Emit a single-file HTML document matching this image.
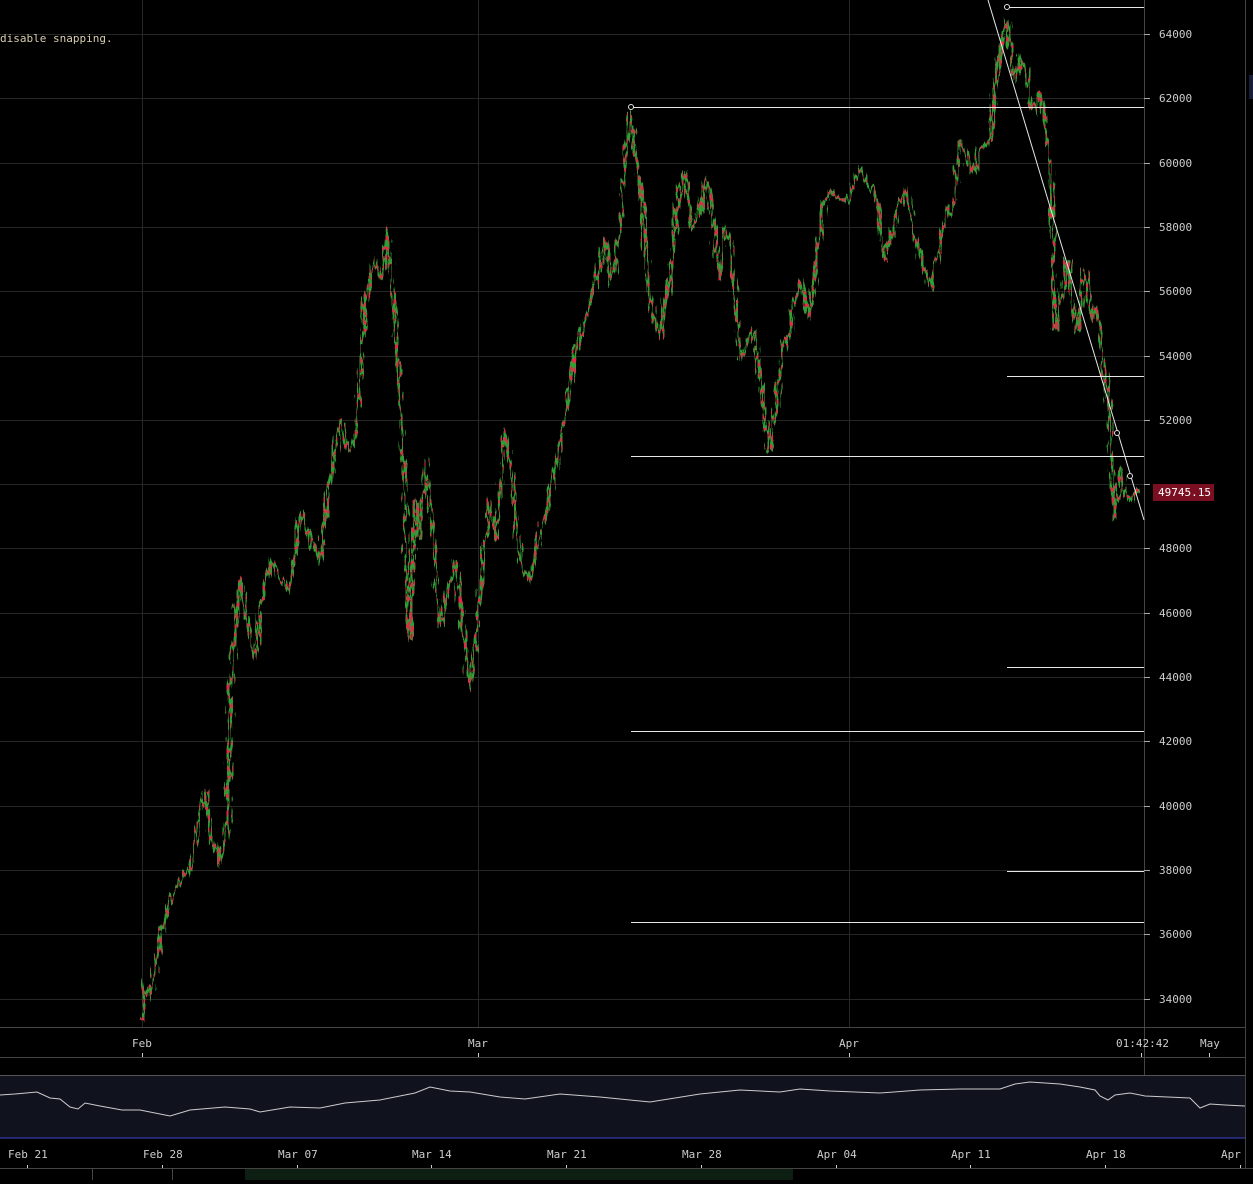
<!DOCTYPE html><html><head><style>
body{margin:0;background:#000;width:1253px;height:1180px;overflow:hidden;font-family:"DejaVu Sans Mono","Liberation Mono",monospace;}
svg text{font-family:"DejaVu Sans Mono","Liberation Mono",monospace;font-size:11px;fill:#ccc}
</style></head><body>
<svg width="1253" height="1180" xmlns="http://www.w3.org/2000/svg">
<defs><filter id="j" x="-5%" y="-5%" width="110%" height="110%"><feTurbulence type="fractalNoise" baseFrequency="0.35 0.05" numOctaves="2" seed="3"/><feDisplacementMap in="SourceGraphic" scale="14" xChannelSelector="R" yChannelSelector="G"/></filter></defs>
<rect width="1253" height="1180" fill="#000"/>
<g stroke="#262626" stroke-width="1">
<line x1="0" y1="34.5" x2="1144" y2="34.5"/><line x1="0" y1="98.5" x2="1144" y2="98.5"/>
<line x1="0" y1="163.5" x2="1144" y2="163.5"/><line x1="0" y1="227.5" x2="1144" y2="227.5"/>
<line x1="0" y1="291.5" x2="1144" y2="291.5"/><line x1="0" y1="356.5" x2="1144" y2="356.5"/>
<line x1="0" y1="420.5" x2="1144" y2="420.5"/><line x1="0" y1="484.5" x2="1144" y2="484.5"/>
<line x1="0" y1="548.5" x2="1144" y2="548.5"/><line x1="0" y1="613.5" x2="1144" y2="613.5"/>
<line x1="0" y1="677.5" x2="1144" y2="677.5"/><line x1="0" y1="741.5" x2="1144" y2="741.5"/>
<line x1="0" y1="806.5" x2="1144" y2="806.5"/><line x1="0" y1="870.5" x2="1144" y2="870.5"/>
<line x1="0" y1="934.5" x2="1144" y2="934.5"/><line x1="0" y1="999.5" x2="1144" y2="999.5"/>
<line x1="142.5" y1="0" x2="142.5" y2="1027"/><line x1="478.5" y1="0" x2="478.5" y2="1027"/>
<line x1="849.5" y1="0" x2="849.5" y2="1027"/>
</g>
<g stroke="#444"><line x1="1144.5" y1="0" x2="1144.5" y2="1075"/><line x1="0" y1="1027.5" x2="1245" y2="1027.5"/><line x1="0" y1="1057.5" x2="1245" y2="1057.5"/><line x1="1245.5" y1="0" x2="1245.5" y2="1168"/><line x1="0" y1="1168.5" x2="1253" y2="1168.5"/></g>
<g stroke="#aaa"><line x1="1144" y1="34.5" x2="1150" y2="34.5"/><line x1="1144" y1="98.5" x2="1150" y2="98.5"/><line x1="1144" y1="163.5" x2="1150" y2="163.5"/><line x1="1144" y1="227.5" x2="1150" y2="227.5"/><line x1="1144" y1="291.5" x2="1150" y2="291.5"/><line x1="1144" y1="356.5" x2="1150" y2="356.5"/><line x1="1144" y1="420.5" x2="1150" y2="420.5"/><line x1="1144" y1="484.5" x2="1150" y2="484.5"/><line x1="1144" y1="548.5" x2="1150" y2="548.5"/><line x1="1144" y1="613.5" x2="1150" y2="613.5"/><line x1="1144" y1="677.5" x2="1150" y2="677.5"/><line x1="1144" y1="741.5" x2="1150" y2="741.5"/><line x1="1144" y1="806.5" x2="1150" y2="806.5"/><line x1="1144" y1="870.5" x2="1150" y2="870.5"/><line x1="1144" y1="934.5" x2="1150" y2="934.5"/><line x1="1144" y1="999.5" x2="1150" y2="999.5"/></g>
<g>
<text x="1159" y="38">64000</text><text x="1159" y="102">62000</text><text x="1159" y="167">60000</text><text x="1159" y="231">58000</text><text x="1159" y="295">56000</text><text x="1159" y="360">54000</text><text x="1159" y="424">52000</text><text x="1159" y="552">48000</text><text x="1159" y="617">46000</text><text x="1159" y="681">44000</text><text x="1159" y="745">42000</text><text x="1159" y="810">40000</text><text x="1159" y="874">38000</text><text x="1159" y="938">36000</text><text x="1159" y="1003">34000</text>
</g>
<text x="0" y="42" style="fill:#d9cdb0">disable snapping.</text>
<g filter="url(#j)">
<polyline fill="none" stroke="#2e9e34" stroke-width="3" points="142,1020 145,985 150,995 160,940 170,900 180,880 190,870 205,790 212,840 220,860 228,820 230,700 240,580 248,630 255,660 262,600 270,560 280,580 290,590 300,510 310,540 320,560 330,480 340,420 348,450 355,440 360,380 365,300 375,260 382,280 388,230 395,330 402,420 406,560 410,640 415,500 420,540 425,460 432,520 440,630 448,590 455,560 462,620 470,690 475,640 480,600 485,540 490,500 497,540 505,430 512,480 520,560 530,580 538,540 545,520 552,480 560,450 568,400 575,350 582,330 590,300 598,270 605,240 610,280 615,270 622,200 630,110 635,150 640,180 645,240 650,300 655,320 660,340 665,300 670,280 678,200 685,170 692,230 700,210 705,180 710,190 715,240 720,280 725,230 730,240 735,300 740,360 748,340 755,330 760,380 765,420 770,450 775,410 780,370 785,340 790,330 795,300 800,280 805,300 810,320 815,270 820,230 825,200 830,190 840,200 850,200 855,180 860,170 868,185 875,190 880,230 885,260 890,240 895,220 900,200 905,190 910,210 915,240 922,260 930,290 938,250 945,220 950,210 955,200 960,140 968,160 975,170 982,150 990,140 995,90 1000,50 1004,30 1007,20 1011,60 1015,80 1020,60 1025,70 1030,100 1035,110 1040,90 1045,120 1050,160 1052,200 1055,330 1058,320 1060,300 1064,280 1068,260 1072,300 1078,330 1082,290 1085,270 1090,300 1092,320 1096,310 1100,340 1104,370 1108,400 1112,470 1115,520 1118,500 1120,470 1125,490 1130,500 1135,495 1140,490"/>
<polyline fill="none" stroke="#e8254a" stroke-width="2" stroke-dasharray="4 5" points="142,1020 145,985 150,995 160,940 170,900 180,880 190,870 205,790 212,840 220,860 228,820 230,700 240,580 248,630 255,660 262,600 270,560 280,580 290,590 300,510 310,540 320,560 330,480 340,420 348,450 355,440 360,380 365,300 375,260 382,280 388,230 395,330 402,420 406,560 410,640 415,500 420,540 425,460 432,520 440,630 448,590 455,560 462,620 470,690 475,640 480,600 485,540 490,500 497,540 505,430 512,480 520,560 530,580 538,540 545,520 552,480 560,450 568,400 575,350 582,330 590,300 598,270 605,240 610,280 615,270 622,200 630,110 635,150 640,180 645,240 650,300 655,320 660,340 665,300 670,280 678,200 685,170 692,230 700,210 705,180 710,190 715,240 720,280 725,230 730,240 735,300 740,360 748,340 755,330 760,380 765,420 770,450 775,410 780,370 785,340 790,330 795,300 800,280 805,300 810,320 815,270 820,230 825,200 830,190 840,200 850,200 855,180 860,170 868,185 875,190 880,230 885,260 890,240 895,220 900,200 905,190 910,210 915,240 922,260 930,290 938,250 945,220 950,210 955,200 960,140 968,160 975,170 982,150 990,140 995,90 1000,50 1004,30 1007,20 1011,60 1015,80 1020,60 1025,70 1030,100 1035,110 1040,90 1045,120 1050,160 1052,200 1055,330 1058,320 1060,300 1064,280 1068,260 1072,300 1078,330 1082,290 1085,270 1090,300 1092,320 1096,310 1100,340 1104,370 1108,400 1112,470 1115,520 1118,500 1120,470 1125,490 1130,500 1135,495 1140,490"/>
</g>
<g stroke="#e6e6e6" stroke-width="1">
<line x1="1007" y1="7.5" x2="1144" y2="7.5"/><line x1="631" y1="107.5" x2="1144" y2="107.5"/>
<line x1="1007" y1="376.5" x2="1144" y2="376.5"/><line x1="631" y1="456.5" x2="1144" y2="456.5"/>
<line x1="1007" y1="667.5" x2="1144" y2="667.5"/><line x1="631" y1="731.5" x2="1144" y2="731.5"/>
<line x1="1007" y1="871.5" x2="1144" y2="871.5"/><line x1="631" y1="922.5" x2="1144" y2="922.5"/>
<line x1="988" y1="0" x2="1144" y2="520"/>
<circle cx="631" cy="107" r="2.5" fill="#000"/><circle cx="1007" cy="7" r="2.5" fill="#000"/><circle cx="1117" cy="433" r="2.5" fill="#000"/><circle cx="1130" cy="476" r="2.5" fill="#000"/>
</g>
<rect x="1153" y="484" width="61" height="17" fill="#7a0f22"/>
<text x="1158" y="496" style="fill:#fff">49745.15</text>
<g stroke="#ccc"><line x1="142.5" y1="1053" x2="142.5" y2="1057"/><line x1="478.5" y1="1053" x2="478.5" y2="1057"/><line x1="849.5" y1="1053" x2="849.5" y2="1057"/><line x1="1141.5" y1="1053" x2="1141.5" y2="1057"/><line x1="1209.5" y1="1053" x2="1209.5" y2="1057"/></g>
<text x="132" y="1047">Feb</text><text x="468" y="1047">Mar</text><text x="839" y="1047">Apr</text><text x="1116" y="1047">01:42:42</text><text x="1200" y="1047">May</text>
<rect x="0" y="1075" width="1245" height="63" fill="#10121e"/>
<line x1="0" y1="1075.5" x2="1245" y2="1075.5" stroke="#555"/>
<line x1="0" y1="1138" x2="1245" y2="1138" stroke="#2b3290" stroke-width="1.5"/>
<polyline fill="none" stroke="#ccc" stroke-width="1" points="0,1095 15,1094 37,1092 50,1098 60,1099 70,1107 78,1109 85,1103 100,1106 122,1110 140,1110 170,1116 190,1110 225,1107 250,1109 260,1112 290,1107 320,1108 345,1103 380,1100 415,1093 430,1087 450,1091 470,1092 500,1097 525,1099 560,1094 600,1097 620,1099 650,1102 700,1094 740,1090 780,1092 800,1089 830,1091 880,1093 920,1090 960,1089 1000,1089 1015,1084 1030,1082 1060,1084 1080,1087 1095,1090 1100,1096 1108,1100 1115,1095 1130,1093 1145,1096 1190,1098 1200,1108 1210,1104 1225,1105 1245,1106"/>
<g stroke="#ccc"><line x1="27.5" y1="1165" x2="27.5" y2="1168"/><line x1="162.5" y1="1165" x2="162.5" y2="1168"/><line x1="297.5" y1="1165" x2="297.5" y2="1168"/><line x1="431.5" y1="1165" x2="431.5" y2="1168"/><line x1="566.5" y1="1165" x2="566.5" y2="1168"/><line x1="701.5" y1="1165" x2="701.5" y2="1168"/><line x1="836.5" y1="1165" x2="836.5" y2="1168"/><line x1="970.5" y1="1165" x2="970.5" y2="1168"/><line x1="1105.5" y1="1165" x2="1105.5" y2="1168"/><line x1="1240.5" y1="1165" x2="1240.5" y2="1168"/></g>
<text x="8" y="1158">Feb 21</text><text x="143" y="1158">Feb 28</text><text x="278" y="1158">Mar 07</text><text x="412" y="1158">Mar 14</text><text x="547" y="1158">Mar 21</text><text x="682" y="1158">Mar 28</text><text x="817" y="1158">Apr 04</text><text x="951" y="1158">Apr 11</text><text x="1086" y="1158">Apr 18</text><text x="1221" y="1158">Apr</text>
<rect x="245" y="1169" width="548" height="11" fill="#0d1f12"/>
<line x1="92.5" y1="1169" x2="92.5" y2="1180" stroke="#444"/><line x1="172.5" y1="1169" x2="172.5" y2="1180" stroke="#444"/>
<rect x="1249" y="75" width="4" height="24" fill="#1a1d3a"/>
</svg>
</body></html>
